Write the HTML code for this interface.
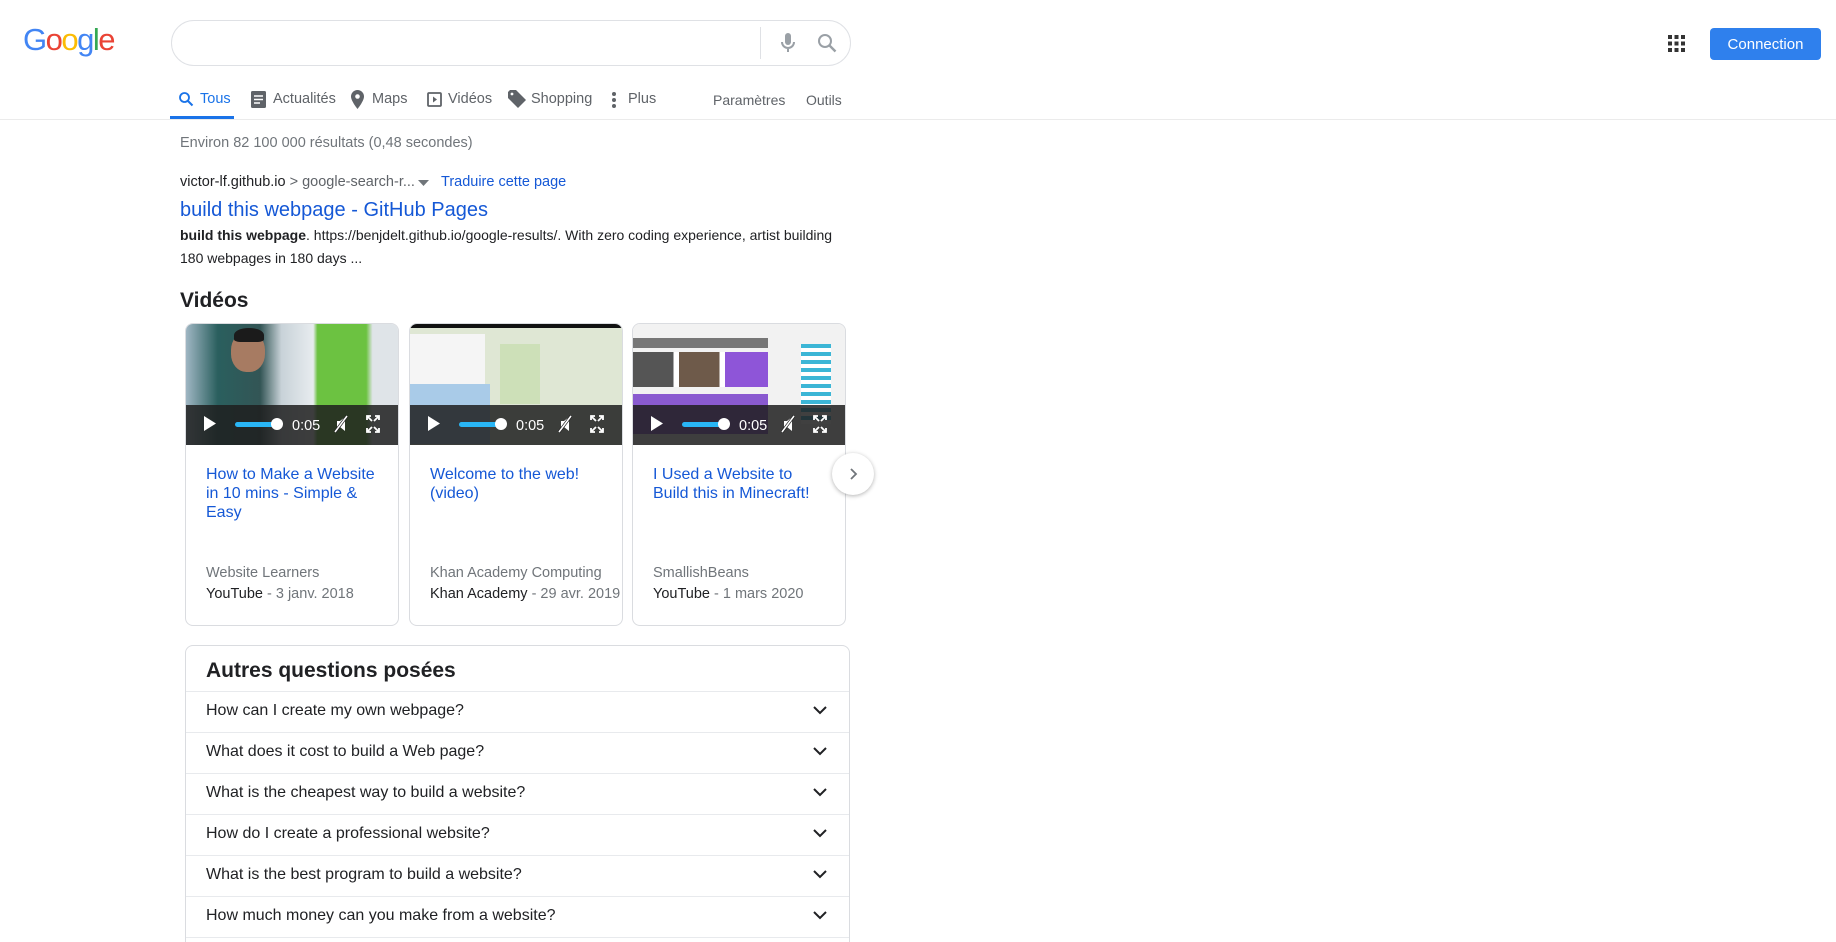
<!DOCTYPE html>
<html style="width:1836px;height:942px;overflow:hidden"><head><meta charset="utf-8"><style>
*{box-sizing:border-box;margin:0;padding:0}
body{width:1836px;height:942px;overflow:hidden;background:#fff;font-family:"Liberation Sans",Arial,sans-serif;position:relative;color:#222}
.a{position:absolute;white-space:nowrap}
.logo{left:23px;top:22px;font-size:31px;letter-spacing:-1.5px;font-family:"Liberation Sans",sans-serif}
.search{left:171px;top:20px;width:680px;height:46px;border:1px solid #dfe1e5;border-radius:23px}
.tab{top:91px;font-size:14.5px;color:#5f6368}
.card{position:absolute;top:323px;width:214px;height:303px;border:1px solid #dadce0;border-radius:8px;overflow:hidden;background:#fff}
.thumb{height:121px;position:relative;overflow:hidden}
.bar{position:absolute;left:0;right:0;top:81px;height:40px;background:rgba(30,30,30,.85)}
.ct{position:absolute;left:20px;top:141px;font-size:16px;line-height:19px;width:172px;white-space:normal;color:#1558d6}
.ch{position:absolute;left:20px;top:241px;font-size:14.5px;color:#70757a}
.src{position:absolute;left:20px;top:262px;font-size:14.5px;color:#202124}
.src span{color:#70757a}
.paa{left:185px;top:645px;width:665px;height:320px;border:1px solid #dadce0;border-radius:8px}
.q{position:absolute;left:0;right:0;height:41px;border-top:1px solid #e8eaed;font-size:16px;color:#202124;padding:10px 0 0 20px}
.q svg{position:absolute;right:22px;top:14px}
</style></head><body>
<div class="a logo"><span style="color:#4285f4">G</span><span style="color:#ea4335">o</span><span style="color:#fbbc05">o</span><span style="color:#4285f4">g</span><span style="color:#34a853">l</span><span style="color:#ea4335">e</span></div>
<div class="a search">
<div style="position:absolute;left:588px;top:6px;width:1px;height:32px;background:#dfe1e5"></div>
<svg style="position:absolute;left:604px;top:10px" width="24" height="24" viewBox="0 0 24 24"><rect x="9" y="2" width="6" height="12" rx="3" fill="#9aa0a6"/><path d="M6 11a6 6 0 0 0 12 0M12 17v4" stroke="#9aa0a6" stroke-width="2" fill="none"/></svg>
<svg style="position:absolute;left:643px;top:10px" width="24" height="24" viewBox="0 0 24 24"><circle cx="10" cy="10" r="6" stroke="#9aa0a6" stroke-width="2" fill="none"/><path d="M14.5 14.5l6 6" stroke="#9aa0a6" stroke-width="2.4"/></svg>
</div>
<svg class="a" style="left:1668px;top:35px" width="17" height="17" viewBox="0 0 17 17" fill="#333"><rect x="0" y="0" width="4" height="4"/><rect x="6.5" y="0" width="4" height="4"/><rect x="13" y="0" width="4" height="4"/><rect x="0" y="6.5" width="4" height="4"/><rect x="6.5" y="6.5" width="4" height="4"/><rect x="13" y="6.5" width="4" height="4"/><rect x="0" y="13" width="4" height="4"/><rect x="6.5" y="13" width="4" height="4"/><rect x="13" y="13" width="4" height="4"/></svg>
<div class="a" style="left:1710px;top:28px;width:111px;height:32px;background:#2f80ed;border-radius:4px;color:#fff;font-size:15px;text-align:center;line-height:33px">Connection</div>

<svg class="a" style="left:178px;top:91px" width="16" height="16" viewBox="0 0 16 16"><circle cx="6.5" cy="6.5" r="4.5" stroke="#1a73e8" stroke-width="1.8" fill="none"/><path d="M10 10l4.5 4.5" stroke="#1a73e8" stroke-width="2"/></svg>
<div class="a tab" style="left:200px;color:#1a73e8">Tous</div>
<svg class="a" style="left:251px;top:91px" width="15" height="17" viewBox="0 0 15 17"><rect width="15" height="17" rx="1.5" fill="#5f6368"/><path d="M3 5h9M3 8.5h9M3 12h6" stroke="#fff" stroke-width="1.6"/></svg>
<div class="a tab" style="left:273px">Actualités</div>
<svg class="a" style="left:351px;top:90px" width="13" height="19" viewBox="0 0 13 19"><path d="M6.5 0C3 0 0 2.8 0 6.5 0 11 6.5 19 6.5 19S13 11 13 6.5C13 2.8 10 0 6.5 0z" fill="#5f6368"/><circle cx="6.5" cy="6.5" r="2.3" fill="#fff"/></svg>
<div class="a tab" style="left:372px">Maps</div>
<svg class="a" style="left:427px;top:92px" width="15" height="15" viewBox="0 0 15 15"><rect x="1" y="1" width="13" height="13" rx="1" stroke="#5f6368" stroke-width="1.8" fill="none"/><path d="M6 4.5v6l4-3z" fill="#5f6368"/></svg>
<div class="a tab" style="left:448px">Vidéos</div>
<svg class="a" style="left:508px;top:90px" width="19" height="19" viewBox="0 0 19 19"><path d="M0 2V8l10 10 8-8L8 0H2z" fill="#5f6368"/><circle cx="4" cy="4" r="1.4" fill="#fff"/></svg>
<div class="a tab" style="left:531px">Shopping</div>
<svg class="a" style="left:611px;top:91px" width="6" height="18" viewBox="0 0 6 18" fill="#5f6368"><circle cx="3" cy="3" r="2"/><circle cx="3" cy="9" r="2"/><circle cx="3" cy="15" r="2"/></svg>
<div class="a tab" style="left:628px">Plus</div>
<div class="a tab" style="left:713px;top:92px;font-size:14px">Paramètres</div>
<div class="a tab" style="left:806px;top:92px;font-size:14px">Outils</div>
<div class="a" style="left:170px;top:116px;width:64px;height:3px;background:#1a73e8"></div>
<div class="a" style="left:0;top:119px;width:1836px;height:1px;background:#ebebeb"></div>

<div class="a" style="left:180px;top:135px;font-size:14.5px;color:#70757a">Environ 82 100 000 résultats (0,48 secondes)</div>
<div class="a" style="left:180px;top:174px;font-size:14.5px;color:#202124">victor-lf.github.io<span style="color:#5f6368"> &gt; google-search-r...</span></div>
<svg class="a" style="left:418px;top:180px" width="11" height="6"><path d="M0 0h11L5.5 6z" fill="#70757a"/></svg>
<div class="a" style="left:441px;top:174px;font-size:14.5px;color:#1558d6">Traduire cette page</div>
<div class="a" style="left:180px;top:199px;font-size:20px;color:#1558d6">build this webpage - GitHub Pages</div>
<div class="a" style="left:180px;top:224px;font-size:14px;line-height:23px;color:#202124;white-space:normal;width:675px"><b>build this webpage</b>. https://benjdelt.github.io/google-results/. With zero coding experience, artist building 180 webpages in 180 days ...</div>
<div class="a" style="left:180px;top:289px;font-size:21px;font-weight:bold;color:#202124">Vidéos</div>

<div class="card" style="left:185px"><div class="thumb" style="background:linear-gradient(90deg,#9fb6c3 0%,#2a5f5e 15%,#355 35%,#c8d2d8 45%,#e8ecef 60%,#6cc241 62%,#6cc241 85%,#dfe4e8 88%)"><div style="position:absolute;left:45px;top:8px;width:34px;height:40px;border-radius:45%;background:#a77b62"></div><div style="position:absolute;left:48px;top:4px;width:30px;height:14px;border-radius:50% 50% 20% 20%;background:#1b1b1b"></div><div class="bar"></div></div>
<div class="ct">How to Make a Website in 10 mins - Simple &amp; Easy</div><div class="ch">Website Learners</div><div class="src">YouTube <span>- 3 janv. 2018</span></div></div>
<div class="card" style="left:409px"><div class="thumb" style="background:linear-gradient(180deg,#111 0,#111 4px,#dfe7d4 4px);"><div style="position:absolute;left:0;top:10px;width:75px;height:50px;background:#f5f5f5"></div><div style="position:absolute;left:0;top:60px;width:80px;height:60px;background:#a9cbe8"></div><div style="position:absolute;left:90px;top:20px;width:40px;height:60px;background:#cde0b8"></div><div class="bar"></div></div>
<div class="ct">Welcome to the web! (video)</div><div class="ch">Khan Academy Computing</div><div class="src">Khan Academy <span>- 29 avr. 2019</span></div></div>
<div class="card" style="left:632px"><div class="thumb" style="background:#f2f2f2"><div style="position:absolute;left:0;top:14px;width:135px;height:10px;background:#777"></div><div style="position:absolute;left:0;top:28px;width:135px;height:35px;background:linear-gradient(90deg,#555 0,#555 30%,#fff 30%,#fff 34%,#6e5a4a 34%,#6e5a4a 64%,#fff 64%,#fff 68%,#8e55d8 68%)"></div><div style="position:absolute;left:0;top:70px;width:135px;height:40px;background:#8a5ad0"></div><div style="position:absolute;left:168px;top:20px;width:30px;height:80px;background:repeating-linear-gradient(180deg,#3cb6d6 0,#3cb6d6 4px,#fff 4px,#fff 8px)"></div><div class="bar"></div></div>
<div class="ct">I Used a Website to Build this in Minecraft!</div><div class="ch">SmallishBeans</div><div class="src">YouTube <span>- 1 mars 2020</span></div></div>

<div class="a" style="left:185px;top:404px;width:662px;height:40px">
<svg style="position:absolute;left:0;top:0" width="662" height="40">
<g id="c" fill="#fff">
<path d="M19 12v15l12-7.5z"/><rect x="50" y="18" width="42" height="5" rx="2.5" fill="#29b6f6"/><circle cx="92" cy="20" r="6"/>
<text x="107" y="26" font-size="14.5" font-family="Liberation Sans">0:05</text>
<path d="M152 17h3l5-4v14l-5-4h-3z"/><path d="M150 28l12-16" stroke="#1e1e1e" stroke-width="3"/><path d="M150 28l12-16" stroke="#fff" stroke-width="1.6"/>
<path d="M182 16v-4h4M190 12h4v4M194 24v4h-4M186 28h-4v-4M183 13l4 4M193 13l-4 4M193 27l-4-4M183 27l4-4" stroke="#fff" stroke-width="1.8" fill="none"/>
</g>
<use href="#c" x="224"/><use href="#c" x="447"/>
</svg></div>
<div class="a" style="left:832px;top:453px;width:42px;height:42px;border-radius:50%;background:#fff;box-shadow:0 1px 4px rgba(0,0,0,.3)"><svg style="position:absolute;left:14px;top:13px" width="14" height="16"><path d="M5 3l5 5-5 5" stroke="#70757a" stroke-width="1.8" fill="none"/></svg></div>

<div class="a paa">
<div style="position:absolute;left:20px;top:13px;font-size:21px;font-weight:bold;color:#202124">Autres questions posées</div>
<div class="q" style="top:45px">How can I create my own webpage?<svg width="14" height="9"><path d="M1 1l6 6 6-6" stroke="#202124" stroke-width="2" fill="none"/></svg></div>
<div class="q" style="top:86px">What does it cost to build a Web page?<svg width="14" height="9"><path d="M1 1l6 6 6-6" stroke="#202124" stroke-width="2" fill="none"/></svg></div>
<div class="q" style="top:127px">What is the cheapest way to build a website?<svg width="14" height="9"><path d="M1 1l6 6 6-6" stroke="#202124" stroke-width="2" fill="none"/></svg></div>
<div class="q" style="top:168px">How do I create a professional website?<svg width="14" height="9"><path d="M1 1l6 6 6-6" stroke="#202124" stroke-width="2" fill="none"/></svg></div>
<div class="q" style="top:209px">What is the best program to build a website?<svg width="14" height="9"><path d="M1 1l6 6 6-6" stroke="#202124" stroke-width="2" fill="none"/></svg></div>
<div class="q" style="top:250px">How much money can you make from a website?<svg width="14" height="9"><path d="M1 1l6 6 6-6" stroke="#202124" stroke-width="2" fill="none"/></svg></div>
<div class="q" style="top:291px"></div>
</div>
</body></html>
